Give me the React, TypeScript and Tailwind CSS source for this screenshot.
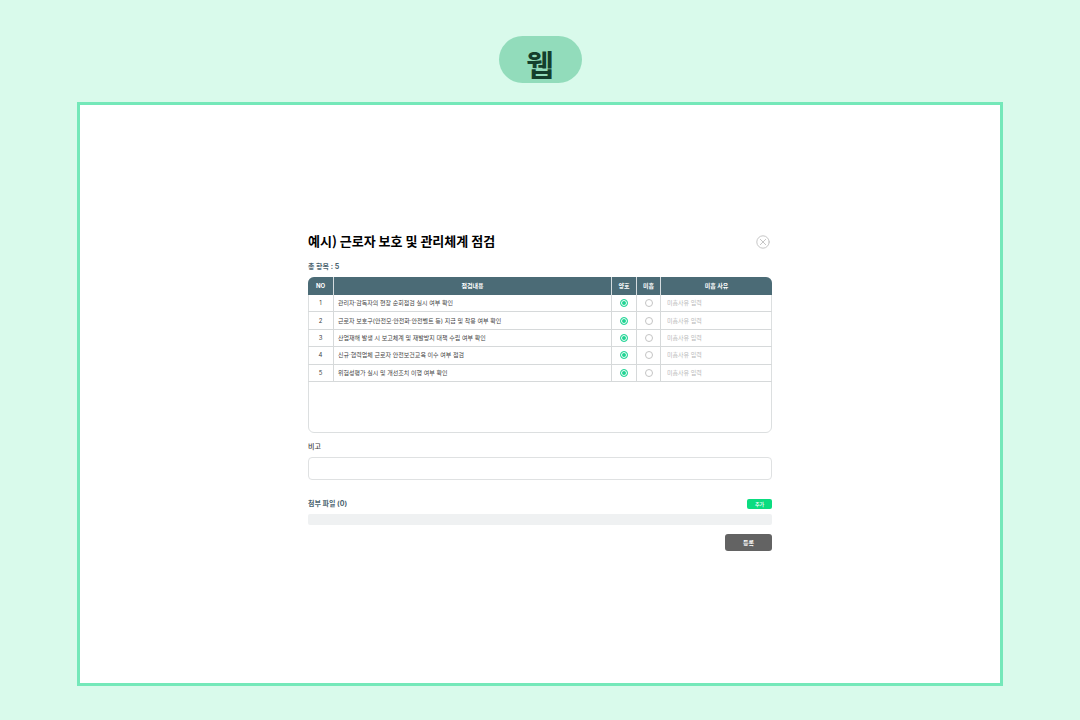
import { useState } from 'react';

type Result = 'good' | 'poor';

interface CheckItem {
  no: number;
  content: string;
}

const items: CheckItem[] = [
  { no: 1, content: '관리자·감독자의 현장 순회점검 실시 여부 확인' },
  { no: 2, content: '근로자 보호구(안전모·안전화·안전벨트 등) 지급 및 착용 여부 확인' },
  { no: 3, content: '산업재해 발생 시 보고체계 및 재발방지 대책 수립 여부 확인' },
  { no: 4, content: '신규·협력업체 근로자 안전보건교육 이수 여부 점검' },
  { no: 5, content: '위험성평가 실시 및 개선조치 이행 여부 확인' },
];

interface ResultRadioProps {
  no: number;
  value: Result;
  label: string;
  checked: boolean;
  onChange: (no: number, value: Result) => void;
}

function ResultRadio({ no, value, label, checked, onChange }: ResultRadioProps) {
  return (
    <input
      type="radio"
      name={`result-${no}`}
      aria-label={`${no} ${label}`}
      checked={checked}
      onChange={() => onChange(no, value)}
      className="mx-auto block size-[8px] appearance-none rounded-full border border-[#c4c4c4] bg-white checked:border-[#2ad79b] checked:bg-[#1fd492] checked:shadow-[inset_0_0_0_1px_#ffffff]"
    />
  );
}

function CheckTable() {
  const [results, setResults] = useState<Record<number, Result>>({});

  const handleChange = (no: number, value: Result) => {
    setResults((prev) => ({ ...prev, [no]: value }));
  };

  return (
    <div className="mt-[5px] h-[156px] rounded-md border border-[#dcdfe0]">
      {/* the header covers the frame's own border */}
      <table className="-mx-px -mt-px h-[105px] w-[calc(100%+2px)] table-fixed border-separate border-spacing-0 text-[6px] leading-[8px]">
        <colgroup>
          <col className="w-[26px]" />
          <col />
          <col className="w-[25px]" />
          <col className="w-[24px]" />
          <col className="w-[111px]" />
        </colgroup>
        <thead className="text-white">
          <tr className="h-[18px]">
            <th className="h-[18px] rounded-tl-md border-r border-[#d5dcdf] bg-[#4b6b76] p-0 font-bold">NO</th>
            <th className="border-r border-[#d5dcdf] bg-[#4b6b76] p-0 font-bold">점검내용</th>
            <th className="border-r border-[#d5dcdf] bg-[#4b6b76] p-0 font-bold">양호</th>
            <th className="border-r border-[#d5dcdf] bg-[#4b6b76] p-0 font-bold">미흡</th>
            <th className="rounded-tr-md bg-[#4b6b76] p-0 font-bold">미흡 사유</th>
          </tr>
        </thead>
        <tbody className="text-[#444444]">
          {items.map((item) => {
            const result = results[item.no] ?? 'good';
            return (
              <tr key={item.no}>
                <td className="border-r border-b border-[#d6d9da] p-0 text-center">{item.no}</td>
                <td className="border-r border-b border-[#d6d9da] p-0 pl-1">{item.content}</td>
                <td className="border-r border-b border-[#d6d9da] p-0">
                  <ResultRadio no={item.no} value="good" label="양호" checked={result === 'good'} onChange={handleChange} />
                </td>
                <td className="border-r border-b border-[#d6d9da] p-0">
                  <ResultRadio no={item.no} value="poor" label="미흡" checked={result === 'poor'} onChange={handleChange} />
                </td>
                <td className="border-b border-[#d6d9da] p-0 pl-1.5">
                  <input
                    type="text"
                    aria-label={`${item.no} 미흡 사유`}
                    placeholder="미흡사유 입력"
                    className="block h-[8px] w-full bg-transparent outline-none placeholder:text-[#b9b9b9]"
                  />
                </td>
              </tr>
            );
          })}
        </tbody>
      </table>
    </div>
  );
}

export default function App() {
  return (
    <div className="flex min-h-screen flex-col items-center bg-[#d9faeb] px-[77px] pt-9 pb-[34px] font-['Inter','Noto_Sans_CJK_KR',sans-serif]">
      <h1 className="flex h-[47px] w-[83px] items-center justify-center rounded-full bg-[#92dcbb] pt-2.5 text-[30px] leading-[40px] font-bold text-[#143f2c]">
        웹
      </h1>

      <main className="mt-[19px] flex w-full flex-1 flex-col justify-center border-3 border-[#74e8b9] bg-white pb-[5px]">
        <form className="mx-auto flex w-full max-w-[464px] flex-col" onSubmit={(e) => e.preventDefault()}>
          <div className="flex h-[20px] items-start justify-between">
            <h2 className="font-['Noto_Sans_CJK_KR',sans-serif] text-[13px] leading-[18px] font-bold text-black">
              예시) 근로자 보호 및 관리체계 점검
            </h2>
            <button type="button" aria-label="닫기" className="mr-0.5 self-center">
              <svg viewBox="0 0 14 14" className="size-[14px]" fill="none" stroke="#c6c6c6" strokeLinecap="round">
                <circle cx="7" cy="7" r="6.2" />
                <path d="M4.3 4.3l5.4 5.4M9.7 4.3l-5.4 5.4" />
              </svg>
            </button>
          </div>

          <p className="mt-[10px] text-[7px] leading-[10px] font-bold text-[#4b6470]">총 항목 : 5</p>
          <CheckTable />

          <label htmlFor="remark" className="mt-[9px] text-[7px] leading-[10px] font-medium text-[#444444]">
            비고
          </label>
          <input
            id="remark"
            type="text"
            className="mt-[5px] h-[23px] rounded-sm border border-[#dfe1e2] px-1.5 text-[7px] outline-none"
          />

          <div className="mt-[18px] flex h-[11px] items-center justify-between">
            <h3 className="text-[7px] leading-[10px] font-bold text-[#4b6470]">첨부 파일 (0)</h3>
            <button type="button" className="h-[10px] w-[25px] rounded-xs bg-[#0bdc80] text-[5px] leading-[10px] font-medium text-white">
              추가
            </button>
          </div>
          <div className="mt-[5px] h-[11px] rounded-xs bg-[#eff1f2]" />

          <button type="submit" className="mt-[9px] h-[17px] w-[47px] self-end rounded-[3px] bg-[#636363] text-[6px] leading-[17px] font-bold text-white">
            등록
          </button>
        </form>
      </main>
    </div>
  );
}
